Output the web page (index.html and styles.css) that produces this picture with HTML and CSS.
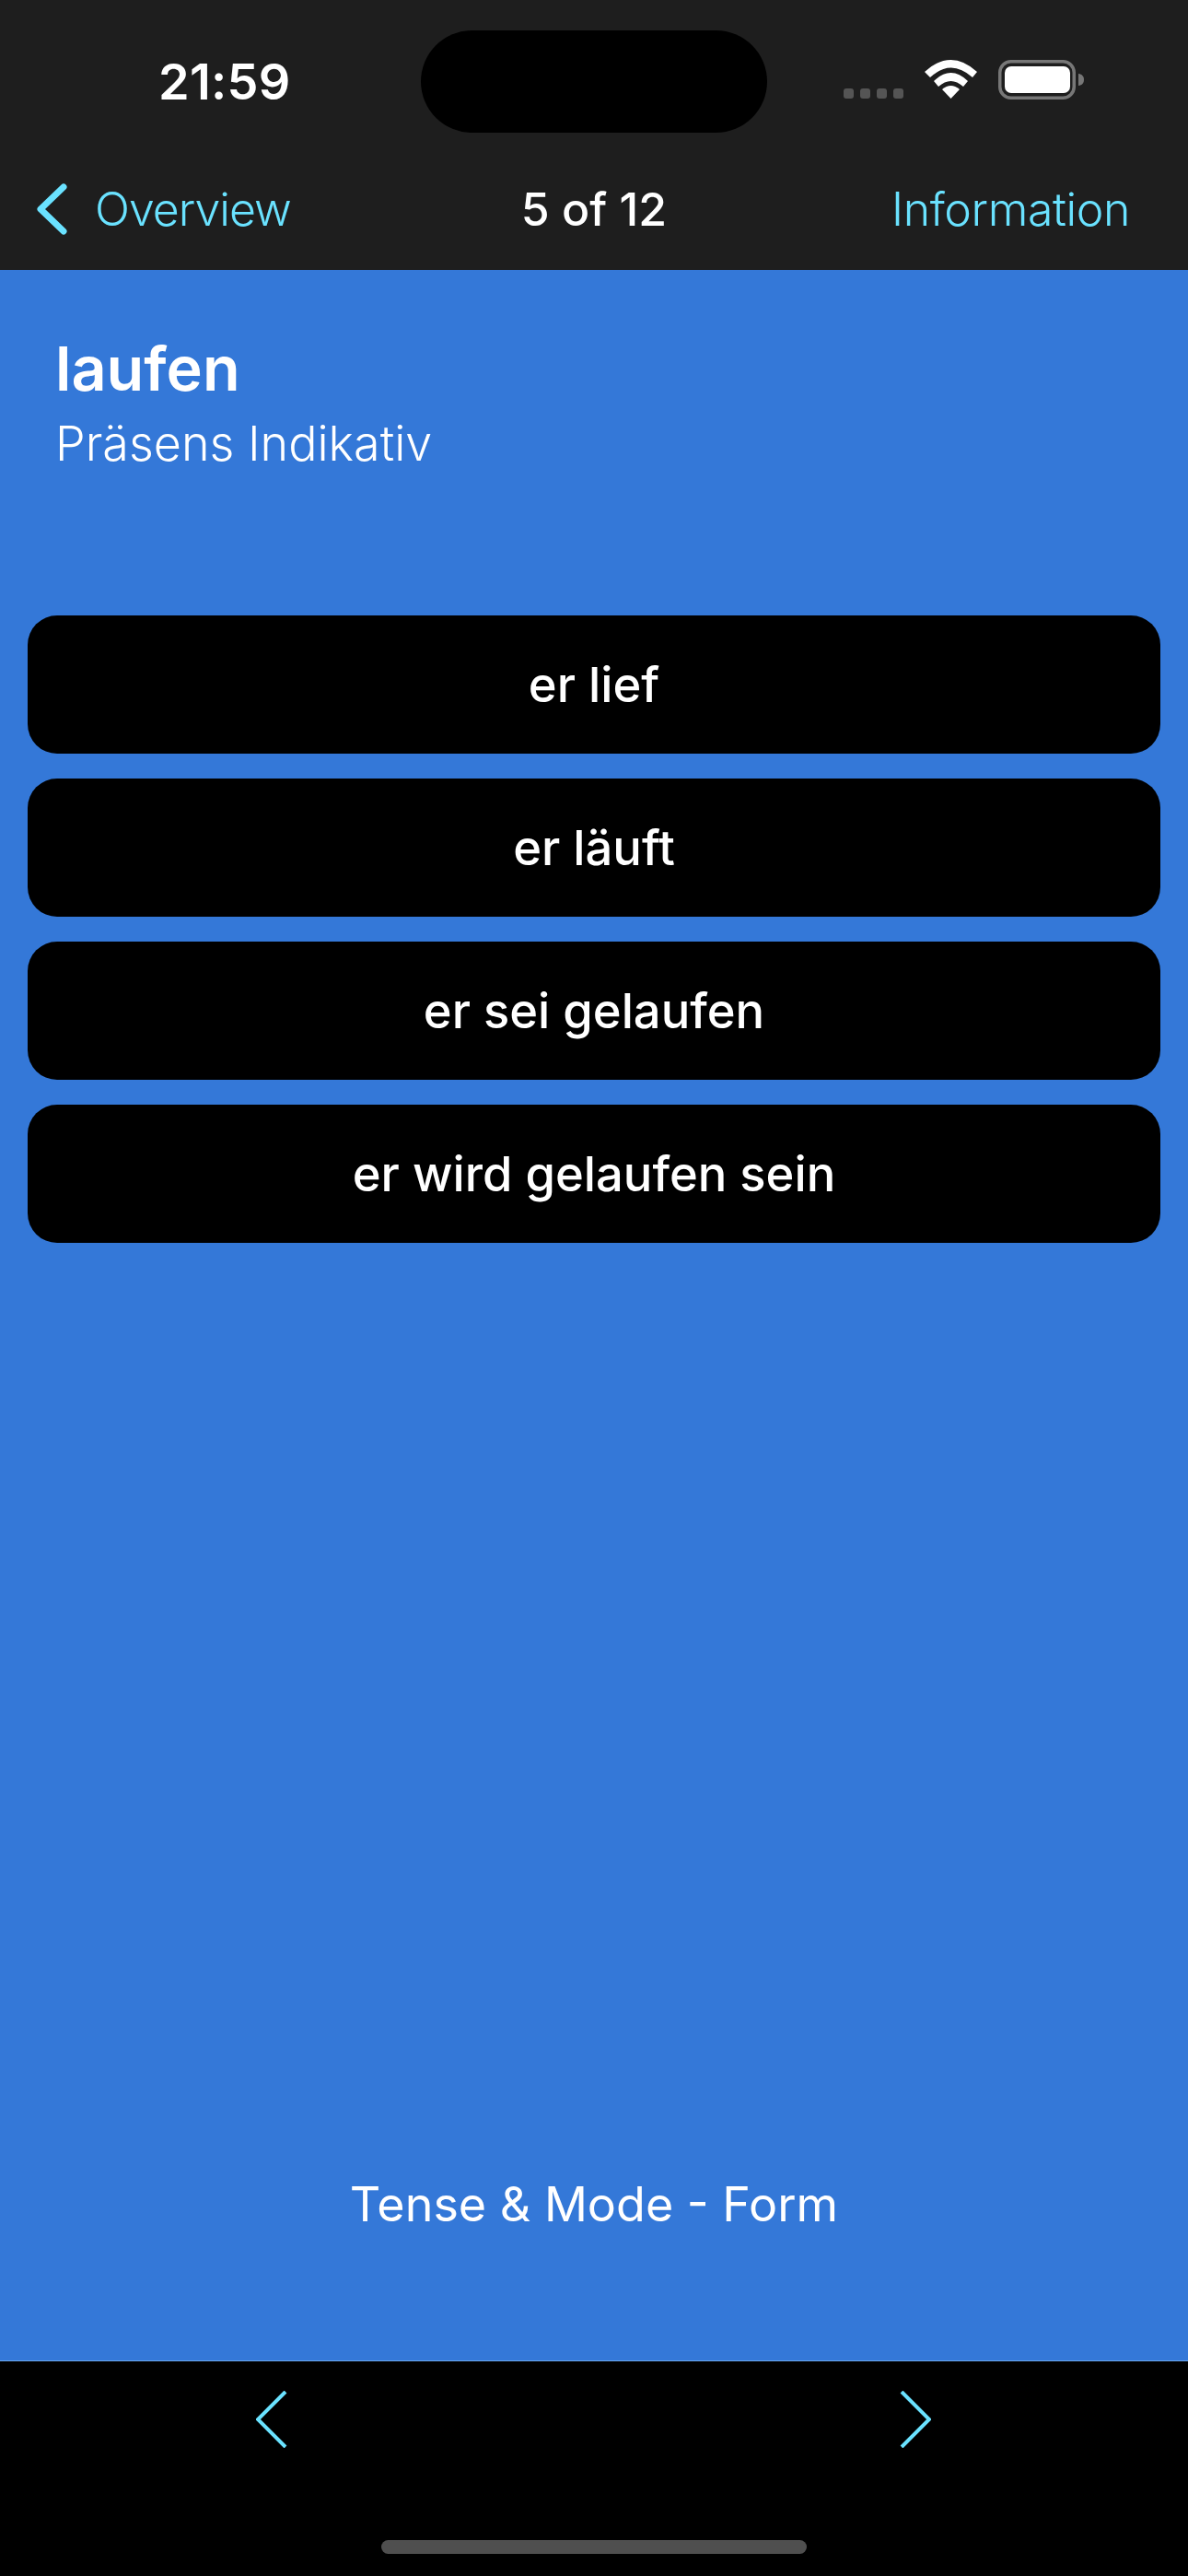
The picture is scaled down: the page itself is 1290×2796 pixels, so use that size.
FILE: index.html
```html
<!DOCTYPE html>
<html>
<head>
	<meta charset="UTF-8">
	<title>laufen</title>
	<link rel="stylesheet" href="styles.css">
</head>
<body>
	<div class="screen">
		<header class="top">
			<div class="status">
				<div class="time">21:59</div>
				<div class="island"></div>
				<div class="status-icons">
					<div class="dots"><span></span><span></span><span></span><span></span></div>
					<svg class="wifi" width="57" height="42" viewBox="0 0 57 42">
						<path d="M0 13 Q28.500 -13 57 13 L52 19 Q28.500 -2 6 19 Z" fill="#fff"/>
						<path d="M10 23 Q28.500 5 47 23 L42 29 Q28.500 17 15 29 Z" fill="#fff"/>
						<path d="M19 32 Q28.500 24 38 32 L28.500 42 Z" fill="#fff"/>
					</svg>
					<svg class="battery" width="93" height="43" viewBox="0 0 93 43">
						<rect x="1.750" y="1.750" width="80.500" height="39.500" rx="12" fill="none" stroke="#777" stroke-width="3.500"/>
						<rect x="7" y="7" width="71" height="29" rx="7" fill="#fff"/>
						<path d="M87 15 C91 15.500 93 18 93 21.500 C93 25 91 27.500 87 28 Z" fill="#777"/>
					</svg>
				</div>
			</div>
			<nav class="navbar">
				<a class="back">
					<svg width="33" height="56" viewBox="0 0 33 56">
						<path d="M29 4 L4 28 L29 52" fill="none" stroke="#6ae2ff" stroke-width="7" stroke-linecap="round" stroke-linejoin="round"/>
					</svg>
					<span>Overview</span>
				</a>
				<div class="nav-title">5 of 12</div>
				<a class="nav-link">Information</a>
			</nav>
		</header>

		<main class="content">
			<div class="heading">
				<h1>laufen</h1>
				<p>Präsens Indikativ</p>
			</div>
			<div class="answers">
				<button class="answer">er lief</button>
				<button class="answer">er läuft</button>
				<button class="answer">er sei gelaufen</button>
				<button class="answer">er wird gelaufen sein</button>
			</div>
			<div class="mode">Tense &amp; Mode - Form</div>
		</main>

		<footer class="bottom">
			<div class="arrows">
				<svg width="34" height="62" viewBox="0 0 34 62">
					<path d="M32 1 L2 31 L32 61" fill="none" stroke="#6ae2ff" stroke-width="4"/>
				</svg>
				<svg width="34" height="62" viewBox="0 0 34 62">
					<path d="M2 1 L32 31 L2 61" fill="none" stroke="#6ae2ff" stroke-width="4"/>
				</svg>
			</div>
			<div class="home-bar"></div>
		</footer>
	</div>
</body>
</html>
```

FILE: styles.css
```css
* {
	box-sizing: border-box;
}

body {
	margin: 0;
	background-color: #000;
	color: #fff;
	font-family: Inter, "Liberation Sans", sans-serif;
}

.screen {
	display: flex;
	flex-direction: column;
	width: 1290px;
	height: 2796px;
	overflow: hidden;
}

.top {
	background-color: #1e1e1e;
	height: 293px;
}

.status {
	display: flex;
	align-items: center;
	height: 177px;
}

.time {
	width: 457px;
	padding-left: 172px;
	font-size: 54px;
	font-weight: 600;
	letter-spacing: 0.3px;
}

.island {
	width: 376px;
	height: 111px;
	border-radius: 56px;
	background-color: #000;
}

.status-icons {
	display: flex;
	align-items: flex-end;
	gap: 23px;
	padding-left: 83px;
	padding-bottom: 4px;
}

.dots {
	display: flex;
	gap: 7px;
	margin-bottom: 1px;
}

.dots span {
	width: 11px;
	height: 11px;
	border-radius: 3px;
	background-color: #555;
}

.wifi {
	margin-bottom: 1px;
}

.navbar {
	display: grid;
	grid-template-columns: 1fr auto 1fr;
	align-items: center;
	height: 100px;
	padding: 0 40px;
	font-size: 50px;
}

.back {
	display: flex;
	align-items: center;
	gap: 30px;
	color: #6ae2ff;
	font-weight: 300;
	letter-spacing: -1px;
}

.nav-title {
	font-weight: 500;
}

.nav-link {
	justify-self: end;
	margin-right: 23px;
	color: #6ae2ff;
	font-weight: 300;
	letter-spacing: -0.4px;
}

.content {
	flex: 1;
	display: flex;
	flex-direction: column;
	background-color: #3478d8;
}

.heading {
	padding: 65px 60px 0;
}

.heading h1 {
	margin: 0;
	font-size: 66.500px;
	font-weight: 600;
	line-height: 84px;
}

.heading p {
	margin: 0;
	padding-top: 9px;
	font-size: 52px;
	font-weight: 300;
	line-height: 62px;
}

.answers {
	display: flex;
	flex-direction: column;
	gap: 27px;
	margin-top: 155px;
	padding: 0 30px;
}

.answer {
	height: 150px;
	border: none;
	border-radius: 32px;
	background-color: #000;
	color: #fff;
	font-family: inherit;
	font-size: 52.500px;
	font-weight: 500;
}

.mode {
	margin-top: auto;
	margin-bottom: 138px;
	font-size: 52px;
	font-weight: 400;
	text-align: center;
}

.bottom {
	height: 234px;
	background-color: #000;
	border-top: 1px solid #6aa5ee;
}

.arrows {
	display: flex;
	justify-content: space-between;
	padding: 32px 279px 0 278px;
}

.home-bar {
	width: 462px;
	height: 15px;
	margin: 100px auto 0;
	border-radius: 8px;
	background-color: #4f4f4f;
}
```
